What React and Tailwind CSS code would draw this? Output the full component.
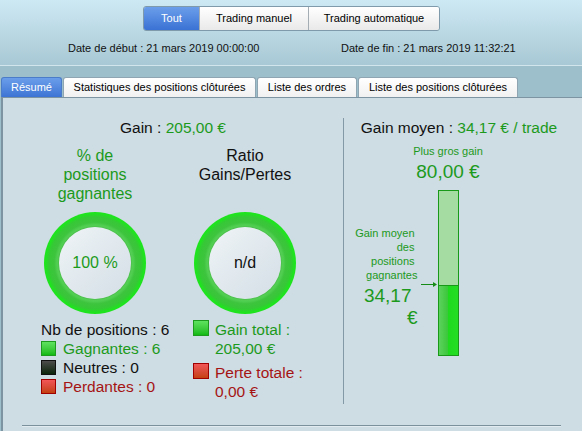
import React from "react";

const modes = [
  { label: "Tout", width: "w-[55px]", active: true },
  { label: "Trading manuel", width: "w-[109px]" },
  { label: "Trading automatique", width: "w-[131px]" },
];

const tabs = [
  { label: "Résumé", width: "w-[61px]", active: true },
  { label: "Statistiques des positions clôturées", width: "w-[193px]" },
  { label: "Liste des ordres", width: "w-[100px]" },
  { label: "Liste des positions clôturées", width: "w-[160px]" },
];

const swatches = {
  green: "border-[#1e9a1e] bg-gradient-to-b from-[#5ee25e] to-[#0fba0f]",
  black: "border-[#111111] bg-gradient-to-b from-[#4c4c4c] to-[#0b250b]",
  red: "border-[#a00000] bg-gradient-to-b from-[#f25656] to-[#c4400c]",
};

const green = "text-[#1c9a1c]";
const red = "text-[#a51414]";

// moyenne vs. plus gros gain, drives the bar fill
const avgGain = 34.17;
const maxGain = 80;
const barInner = 164;
const fillH = Math.round((barInner * avgGain) / maxGain);
const fillTop = barInner - fillH;

const Swatch = ({ color, size = "w-[15px] h-[15px]" }) => (
  <span className={`block shrink-0 border ${size} ${swatches[color]}`} />
);

const Ring = ({ children, textClass }) => (
  <div className="w-[102px] h-[102px] rounded-full bg-[radial-gradient(circle_closest-side,#62da62_70%,#3ec43e_80%,#36c836_90%,#1ee41e_97%)] flex items-center justify-center">
    <div className="w-[72px] h-[72px] rounded-full bg-gradient-to-br from-[#eff4f7] to-[#d3dee5] shadow-[0_0_2px_rgba(0,90,0,0.6)] flex items-center justify-center">
      <span className={`text-[16px] ${textClass}`}>{children}</span>
    </div>
  </div>
);

const App = () => {
  return (
    <div className="w-[582px] h-[431px] overflow-hidden bg-[#9dbecb] text-[#111111] font-['Liberation_Sans',Arial,sans-serif]">
      {/* filtres et période */}
      <div className="h-[66px] bg-gradient-to-b from-[#cde9f4] to-[#a8c8d5] border-b border-[#d3e5ec]">
        <div className="ml-[143px] pt-[6px] flex">
          <div className="flex h-[25px] rounded-[3px] border border-[#7f9aaa] overflow-hidden text-[11px]">
            {modes.map((m, i) => (
              <div
                key={m.label}
                className={`flex items-center justify-center ${m.width} ${i ? "border-l border-[#a3adb3]" : ""} ${
                  m.active
                    ? "bg-gradient-to-b from-[#6b9eea] to-[#3a72d4] text-white"
                    : "bg-gradient-to-b from-white to-[#e9e9e9] text-black"
                }`}
              >
                {m.label}
              </div>
            ))}
          </div>
        </div>
        <div className="flex mt-[10px] text-[11px] leading-[14px]">
          <span className="w-[341px] pl-[68px]">Date de début : 21 mars 2019 00:00:00</span>
          <span>Date de fin : 21 mars 2019 11:32:21</span>
        </div>
      </div>

      <div className="flex gap-[1px] pl-[1px] pt-[11px] h-[31px] text-[11px]">
        {tabs.map((t) => (
          <div
            key={t.label}
            className={`${t.width} h-[20px] flex items-center justify-center rounded-t-[3px] border border-b-0 ${
              t.active
                ? "bg-gradient-to-b from-[#6b9eea] to-[#3d74d4] border-[#4a7cc8] text-white"
                : "bg-gradient-to-b from-white to-[#f1f1f1] border-[#8fa5b1] text-black"
            }`}
          >
            {t.label}
          </div>
        ))}
      </div>

      <div className="ml-[1px] h-[334px] border-l-2 border-t border-[#7d95a2] bg-[#cedce3] flex flex-col">
        <div className="h-[327px] flex">
          {/* résumé des gains */}
          <div className="w-[340px] flex flex-col">
            <p className="mt-[21px] text-center text-[15.5px] leading-[18px]">
              Gain : <span className={green}>205,00 €</span>
            </p>
            <div className="flex pl-[17px] mt-[9px]">
              <div className="w-[150px] flex flex-col items-center">
                <p className={`w-[90px] h-[58px] text-center text-[16px] leading-[19px] ${green}`}>
                  % de positions gagnantes
                </p>
                <div className="mt-[8px]">
                  <Ring textClass={green}>100 %</Ring>
                </div>
                <div className="self-start ml-[21px] mt-[6px] text-[15.5px] leading-[19px]">
                  <p>Nb de positions : 6</p>
                  <div className="flex items-center gap-[7px]">
                    <Swatch color="green" />
                    <span className={green}>Gagnantes : 6</span>
                  </div>
                  <div className="flex items-center gap-[7px]">
                    <Swatch color="black" />
                    <span>Neutres : 0</span>
                  </div>
                  <div className="flex items-center gap-[7px]">
                    <Swatch color="red" />
                    <span className={red}>Perdantes : 0</span>
                  </div>
                </div>
              </div>

              <div className="w-[150px] flex flex-col items-center">
                <p className="w-[110px] h-[58px] text-center text-[16px] leading-[19px]">Ratio Gains/Pertes</p>
                <div className="mt-[8px]">
                  <Ring textClass="text-[#111111]">n/d</Ring>
                </div>
                <div className="self-start ml-[23px] mt-[6px] text-[15.5px] leading-[19px]">
                  <div className="flex items-start gap-[6px]">
                    <Swatch color="green" size="w-[16px] h-[16px]" />
                    <p className={green}>
                      Gain total :<br />
                      205,00 €
                    </p>
                  </div>
                  <div className="flex items-start gap-[6px] mt-[5px]">
                    <Swatch color="red" size="w-[16px] h-[16px]" />
                    <p className={red}>
                      Perte totale :<br />
                      0,00 €
                    </p>
                  </div>
                </div>
              </div>
            </div>
          </div>

          {/* gain moyen */}
          <div className="mt-[20px] h-[286px] w-[231px] border-l border-[#8399a5] flex flex-col">
            <p className="mt-[1px] text-center text-[15.5px] leading-[18px]">
              Gain moyen : <span className={green}>34,17 € / trade</span>
            </p>
            <div className={`ml-[54px] w-[100px] flex flex-col items-center ${green}`}>
              <p className="mt-[8px] text-[11px] leading-[13px]">Plus gros gain</p>
              <p className="mt-[3px] text-[19px] leading-[22px]">80,00 €</p>
              <div className="relative mt-[7px] w-[21px] h-[166px] border border-[#189a18] bg-[#a5dca1] flex flex-col justify-end">
                <div
                  className="bg-[linear-gradient(to_right,#5cd25c_0%,#3cc83c_45%,#1fd91f_50%,#24de24_100%)] border-t border-[#189a18]"
                  style={{ height: fillH }}
                />
                <div className="absolute right-[40px] w-[64px] text-right" style={{ top: fillTop - 59 }}>
                  <div className="text-[11px] leading-[14px]">
                    <p className="pr-[3px]">Gain moyen</p>
                    <p className="pr-[3px]">des</p>
                    <p className="pr-[3px]">positions</p>
                    <p>gagnantes</p>
                  </div>
                  <p className="mt-[3px] pr-[6px] text-[19px] leading-[22px]">34,17</p>
                  <p className="text-[19px] leading-[22px]">€</p>
                </div>
                <svg
                  className="absolute left-[-18px]"
                  style={{ top: fillTop - 4 }}
                  width="17"
                  height="7"
                  viewBox="0 0 17 7"
                >
                  <line x1="0" y1="3.5" x2="15" y2="3.5" stroke="#168c16" strokeWidth="1" />
                  <path d="M12 1 L16 3.5 L12 6 Z" fill="#168c16" />
                </svg>
              </div>
            </div>
          </div>
        </div>
        <div className="ml-[19px] w-[539px] border-t border-b border-t-[#7b929d] border-b-[#e2ebef]" />
      </div>
    </div>
  );
};

export default App;
